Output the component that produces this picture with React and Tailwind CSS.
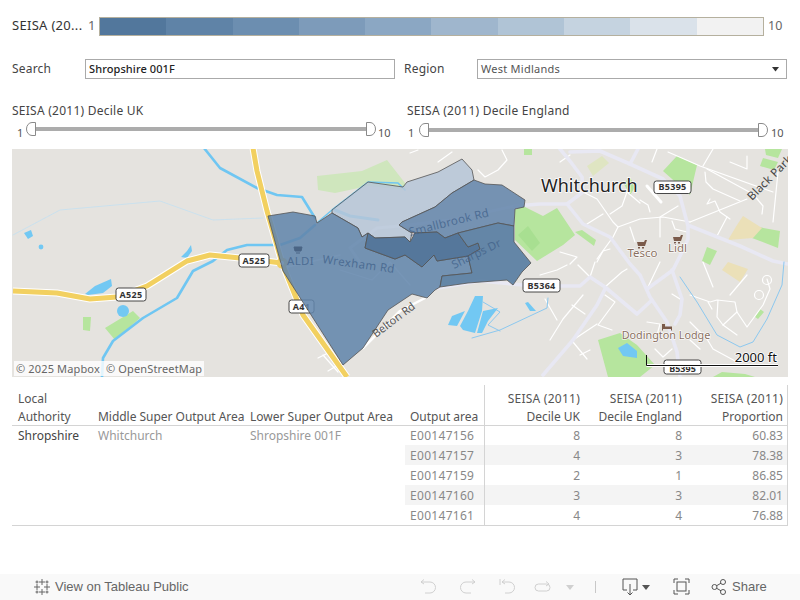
import React from "react";

const F = { fontFamily: '"Noto Sans", "Open Sans", sans-serif' };
const legend = ["#52779c","#5f83a7","#6c8eb0","#7d9bba","#8ba7c3","#9fb6cd","#b0c4d6","#c5d3e0","#dae2ea","#f2f2f2"];

function Thumb({ side }) {
  return side === "l" ? (
    <svg width="10" height="14" viewBox="0 0 10 14" className="shrink-0"><path d="M9.500.5H6a5.500 6.500 0 0 0 0 13h3.500z" fill="#fff" stroke="#8a8a8a"/></svg>
  ) : (
    <svg width="10" height="14" viewBox="0 0 10 14" className="shrink-0"><path d="M.5.5H4a5.500 6.500 0 0 1 0 13H.5z" fill="#fff" stroke="#8a8a8a"/></svg>
  );
}

function Shield({ x, y, w, t, h = 13 }) {
  return (
    <g>
      <rect x={x} y={y} width={w} height={h} rx="2.500" fill="#fff" stroke="#333" strokeWidth="0.9" />
      <text x={x + w / 2} y={y + h / 2 + 3.200} textAnchor="middle" fontSize="9" fontWeight="700" fill="#333" letterSpacing="0.3">{t}</text>
    </g>
  );
}

const main = [
  "M560 149L570 161L582 177L583 192L567 204L583 224L610 237L630 264L640 275L650 297L667 322L677 352L680 377",
  "M570 152L600 151L630 164L663 179L680 196L688 226L688 239L680 256L673 270L647 289",
  "M638 149L630 164",
  "M515 206L540 204L567 204",
  "M690 226L740 246L773 261L788 264",
  "M438 288L480 281L523 285L560 286L580 286L590 277L605 287L637 314L652 300",
  "M605 289L597 305L573 340L543 375",
  "M672 270L682 299L680 315L675 324",
];
const thin = [
  "M583 192L597 199L613 222L618 227L640 219L663 217L690 222","M690 222L747 199","M618 227L613 237L597 259",
  "M678 206L660 217L660 237","M707 169L753 194L763 206L762 214","M668 152L700 166L773 192","M705 172L706 182L713 189L740 201",
  "M710 199L707 204L715 201L720 212L730 219","M727 217L717 236","M610 214L622 206L627 192","M603 214L587 224",
  "M657 149L652 162","M713 149L703 166","M730 162L747 169L747 156","M778 172L773 222","M672 221L675 229L687 232","M630 227L635 242",
  "M560 162L570 155","M560 252L577 257L570 264","M597 262L603 251L610 249","M410 153L418 150","M438 162L452 152",
  "M502 150L507 160L498 170L485 177L478 170","M640 200L648 205L650 212","M627 192L640 203",
  "M540 275L557 270L567 265","M578 265L590 277","M595 262L590 277","M605 287L622 272L627 269","M647 289L660 262",
  "M545 299L557 320","M583 295L563 319L550 340","M572 305L585 314","M605 295L615 302L598 325L612 330","M597 324L573 340",
  "M573 342L587 359","M580 355L590 350","M647 322L660 324L657 335","M690 322L707 339L713 349L737 362","M690 340L700 349",
  "M655 349L663 357L672 349","M690 295L710 302L717 300L735 302L737 312L723 325L717 317L718 300","M708 302L712 309",
  "M737 312L747 327L763 305L770 289L767 279","M723 325L737 335","M703 262L713 287","M672 294L680 299","M747 275L730 295",
  "M318 358L328 353M323 355L338 372M328 371L338 365",
];

function MapSvg() {
  return (
    <svg viewBox="12 149 776 228" width="776" height="228" className="block" style={F}>
      <rect x="12" y="149" width="776" height="228" fill="#e5e3df" />
      <g fill="#b6e59e">
        <path d="M515 210L523 206L543 216L557 208L575 235L563 245L537 261L515 240Z" />
        <path d="M575 232L582 230L596 240L594 246Z" />
        <path d="M663 171L677 156L697 165L690 195Z" />
        <path d="M763 158L778 162L774 170L760 166Z" />
        <path d="M765 149L782 149L778 158L766 155Z" />
        <path d="M524 149L532 149L532 155L524 155Z" />
        <path d="M753 226L780 231L778 248L752 238Z" />
        <path d="M707 247L717 251L710 265L702 261Z" />
        <path d="M598 340L620 333L637 345L655 365L640 377L608 377Z" />
        <path d="M83 317L91 317L90 331L83 330Z" />
        <path d="M105 328L133 311L140 318L115 340Z" />
        <path d="M755 317L760 309L764 312L758 319Z" />
        <path d="M624 184L629 177L636 186L630 195Z" />
        <path d="M713 377L722 372L745 374L755 377Z" />
      </g>
      <path d="M317 176L362 171L387 160L405 183L405 190L368 186L335 193L318 190Z" fill="#cfe6bd" />
      <path d="M518 235L528 226L540 243L532 251Z" fill="#a8df91" />
      <g fill="#ebe0b8">
        <path d="M728 240L737 225L743 216L762 228L753 238Z" />
        <path d="M722 270L728 262L748 269L740 282Z" />
      </g>
      <path d="M587 166L602 156L609 163L593 176Z" fill="#dfe5c2" />
      <g fill="none" stroke="#fff" strokeWidth="1.200" strokeLinecap="round" strokeLinejoin="round">
        {thin.map((d) => <path key={d} d={d} />)}
        <circle cx="767" cy="280" r="4.500" />
        <circle cx="759" cy="295" r="4.500" />
        <path d="M647 186L661 202" strokeWidth="3" />
        <path d="M360 262L350 248L377 228L400 226L450 220L515 206" strokeWidth="3" stroke="#f3f3f8" />
        <path d="M427 297L400 311L363 348" strokeWidth="2.500" />
        <path d="M283 268L340 255" strokeWidth="1.500" />
        <path d="M340 270L372 280L390 262L410 285" strokeWidth="1.200" />
      </g>
      <g fill="none" stroke="#e8e8f3" strokeWidth="3.600" strokeLinecap="round" strokeLinejoin="round">
        {main.map((d) => <path key={d} d={d} />)}
      </g>
      <g fill="none" stroke="#6fc6f2" strokeLinecap="round" strokeLinejoin="round">
        <path d="M204 148L220 168L257 188L277 195L302 197L315 218" strokeWidth="2.600" />
        <path d="M315 225L300 238L280 245L247 245L227 250L213 261L193 271L177 298L143 318L113 341L103 358L102 377" strokeWidth="2.600" />
        <path d="M318 222L332 210L358 190L368 182L398 183L405 190" strokeWidth="1.600" />
        <path d="M335 210L350 216L378 220" strokeWidth="3" />
        <path d="M13 235L60 210L160 201L213 220L263 218" strokeWidth="0.7" stroke="#bfe0f3" />
        <path d="M472 338L500 330L547 308L548 298" strokeWidth="1" stroke="#8cc8ef" />
        <path d="M483 302L500 312L488 325L500 331" strokeWidth="1" stroke="#8cc8ef" />
        <path d="M680 277L697 302L717 335L740 347L753 342L767 319L782 285L784 262" strokeWidth="1" stroke="#8cc8ef" />
      </g>
      <g fill="#72c8f3">
        <path d="M85 294L95 286L111 279L112 286L103 293L88 295Z" />
        <path d="M181 257L187 251L191 245L192 251L187 258Z" />
        <circle cx="123" cy="311" r="6" />
        <circle cx="41" cy="247" r="2.400" />
        <path d="M24 233L31 230L33 236L28 239Z" />
        <path d="M460 326L468 311L475 296L483 296L482 311L475 333L463 330Z" />
        <path d="M477 333L483 311L498 308L488 321L482 333Z" />
        <path d="M448 325L452 316L465 311L457 326Z" />
        <path d="M525 303L528 302L536 311L530 311Z" />
        <path d="M618 348L627 343L637 351L637 358L623 356Z" />
      </g>
      <g fill="none" strokeLinecap="butt" strokeLinejoin="round">
        <path d="M253 148L257 171L267 211L282 263L303 315L347 377" stroke="#fff" strokeWidth="7" />
        <path d="M13 291L57 293L90 299L117 297L147 286L187 261L210 255L240 258L282 263" stroke="#fff" strokeWidth="7" />
        <path d="M253 148L257 171L267 211L282 263L303 315L347 377" stroke="#f2d060" strokeWidth="5" />
        <path d="M13 291L57 293L90 299L117 297L147 286L187 261L210 255L240 258L282 263" stroke="#f2d060" strokeWidth="5" />
      </g>
      <circle cx="282" cy="263" r="5.500" fill="#f2d060" />
      <circle cx="282" cy="263" r="2" fill="#fff" />
      <Shield x={116} y={288} w={30} t="A525" />
      <Shield x={239} y={254} w={30} t="A525" />
      <Shield x={289} y={300} w={25} t="A41" />
      <g strokeLinejoin="round" stroke="#555" strokeWidth="1" strokeOpacity="0.8">
        <path d="M332 210L368 182L403 187L407 182L438 172L462 159L472 170L474 180L452 193L435 207L402 222L399 225L412 233L410 242L405 237L375 238L368 233L362 237L358 228L332 213Z" fill="#b6c6d8" fillOpacity="0.85" />
        <path d="M268 216L293 212L315 216L317 223L332 213L358 228L362 237L368 233L365 248L395 259L405 255L422 267L434 255L437 261L468 256L472 273L442 276L440 287L435 290L427 298L412 294L403 300L388 310L363 348L343 365L283 271Z" fill="#6285ab" fillOpacity="0.87" />
        <path d="M399 225L402 222L435 207L452 193L474 180L485 184L502 185L525 200L524 207L515 209L514 226L498 223L458 233L445 238L437 232L415 233L410 232Z" fill="#6888ad" fillOpacity="0.9" />
        <path d="M365 248L368 233L375 238L405 237L410 242L415 233L437 232L445 238L458 233L468 247L478 243L480 249L468 256L437 261L434 255L422 267L405 255L395 259Z" fill="#4a6f96" fillOpacity="0.93" />
        <path d="M458 233L498 223L514 226L514 242L531 263L522 272L513 285L507 280L468 283L440 287L442 276L472 273L468 256L480 249L478 243L468 247Z" fill="#5a7fa3" fillOpacity="0.93" />
      </g>
      <g fill="#42628a" fillOpacity="0.8">
        <text x="322" y="263" fontSize="11.500" transform="rotate(8 322 263)" letterSpacing="0.4">Wrexham Rd</text>
        <text x="410" y="236" fontSize="11.500" transform="rotate(-14 410 236)" letterSpacing="0.3">Smallbrook Rd</text>
        <text x="454" y="269" fontSize="11.500" transform="rotate(-26 454 269)">Sharps Dr</text>
        <text x="287" y="265" fontSize="11.500" letterSpacing="0.3">ALDI</text>
      </g>
      <text x="376" y="338" fontSize="11" fill="#555" transform="rotate(-37 376 338)">Belton Rd</text>
      <path d="M294 247h8l-1 4h-6zM296 253h4" stroke="#4a6585" fill="#4a6585" strokeWidth="1" />
      <text x="541" y="192" fontSize="18" fill="#222" stroke="#fff" strokeWidth="1.500" paintOrder="stroke">Whitchurch</text>
      <Shield x={654} y={181} w={37} t="B5395" h={12.500} />
      <Shield x={523} y={279} w={37} t="B5364" />
      <rect x="664" y="360" width="37" height="14" rx="2.500" fill="#fff" stroke="#333" strokeWidth="0.9" />
      <text x="682.500" y="372" textAnchor="middle" fontSize="9" fontWeight="700" fill="#333">B5395</text>
      <text x="752" y="201" fontSize="11.500" fill="#444" transform="rotate(-45 752 201)" letterSpacing="0.2">Black Park Rd</text>
      <g fill="#7a5a4a">
        <path d="M637 242h7l1-2h2l-2 6h-7zM638 247h2v1.500h-2zM642 247h2v1.500h-2z" />
        <path d="M673 237h7l1-2h2l-2 6h-7zM674 242h2v1.500h-2zM678 242h2v1.500h-2z" />
        <path d="M662 324v6.500h1v-1.500h8v1.500h1v-4h-7v-2.500z" />
      </g>
      <g fill="#8a7061" stroke="#fff" strokeWidth="1.200" paintOrder="stroke">
        <text x="642.500" y="257" textAnchor="middle" fontSize="11.500">Tesco</text>
        <text x="677.500" y="252" textAnchor="middle" fontSize="11.500">Lidl</text>
        <text x="666" y="339" textAnchor="middle" fontSize="10.800">Dodington Lodge</text>
      </g>
      <path d="M646.500 365.500H778" fill="none" stroke="#fff" strokeWidth="3" />
      <text x="777" y="362" textAnchor="end" fontSize="13" fill="#111" stroke="#fff" strokeWidth="1.500" paintOrder="stroke">2000 ft</text>
      <path d="M646.500 355V365.500H778" fill="none" stroke="#111" strokeWidth="1" />
    </svg>
  );
}

const rows = [
  ["E00147156", "8", "8", "60.83"],
  ["E00147157", "4", "3", "78.38"],
  ["E00147159", "2", "1", "86.85"],
  ["E00147160", "3", "3", "82.01"],
  ["E00147161", "4", "4", "76.88"],
];

function Table() {
  return (
    <div className="w-[776px] ml-[12px] mt-[8px] border-b border-[#d4d4d4] text-[12px] text-[#555]">
      <div className="flex h-[41px] border-b border-[#d4d4d4] leading-[18px]">
        <div className="w-[86px] pl-[6px] pt-[5px]">Local<br />Authority</div>
        <div className="w-[152px] pt-[23px] whitespace-nowrap tracking-[-0.03px]">Middle Super Output Area</div>
        <div className="w-[160px] pt-[23px] whitespace-nowrap">Lower Super Output Area</div>
        <div className="w-[74px] pt-[23px] whitespace-nowrap">Output area</div>
        <div className="w-[101px] border-l border-[#d4d4d4] text-right pt-[5px] pr-[5px]"><span className="tracking-[0.25px]">SEISA (2011)</span><br />Decile UK</div>
        <div className="w-[102px] text-right pt-[5px] pr-[5px]"><span className="tracking-[0.25px]">SEISA (2011)</span><br />Decile England</div>
        <div className="flex-1 text-right pt-[5px] pr-[4px] border-r border-[#d4d4d4]"><span className="tracking-[0.25px]">SEISA (2011)</span><br />Proportion</div>
      </div>
      <div className="flex">
        <div className="w-[86px] pl-[6px] leading-[20px] text-[#444]">Shropshire</div>
        <div className="w-[152px] leading-[20px] text-[#999]">Whitchurch</div>
        <div className="w-[155px] leading-[20px] text-[#999]">Shropshire 001F</div>
        <div className="flex-1">
          {rows.map((r, i) => (
            <div key={r[0]} className={`flex leading-[20px] text-[#888] ${i === 0 ? "h-[19px]" : "h-[20px]"} ${i % 2 ? "bg-[#f4f4f4]" : ""}`}>
              <div className={`w-[79px] pl-[5px] tracking-[0.3px] ${i ? "pt-[1px]" : ""}`}>{r[0]}</div>
              <div className={`w-[101px] text-right pr-[5px] border-l border-[#d4d4d4] ${i ? "pt-[1px]" : ""}`}>{r[1]}</div>
              <div className={`w-[102px] text-right pr-[5px] ${i ? "pt-[1px]" : ""}`}>{r[2]}</div>
              <div className={`flex-1 text-right pr-[4px] border-r border-[#d4d4d4] ${i ? "pt-[1px]" : ""}`}>{r[3]}</div>
            </div>
          ))}
        </div>
      </div>
    </div>
  );
}

function Ico({ w = 18, children, className = "" }) {
  return (
    <svg width={w} height="18" viewBox={`0 0 ${w} 18`} fill="none" className={`shrink-0 ${className}`}>{children}</svg>
  );
}

function Toolbar() {
  const dim = "#d0d0d0";
  const on = "#555";
  return (
    <div className="mt-auto h-[26px] bg-[#f9f9f9] flex items-center text-[#666]" style={{ fontFamily: '"Liberation Sans", Arial, sans-serif' }}>
      <div className="w-[419px] flex items-center shrink-0">
        <svg width="18" height="18" viewBox="0 0 18 18" className="ml-[33px]" stroke="#666" strokeWidth="1" fill="none">
          <path d="M9 1v6M6 4h6M9 11v6M6 14h6M1 9h6M4 6v6M11 9h6M14 6v6M4 2.500v3M2.500 4h3M14 2.500v3M12.500 4h3M4 12.500v3M2.500 14h3M14 12.500v3M12.500 14h3" />
        </svg>
        <span className="ml-[4px] text-[13px] font-medium tracking-[-0.02px]">View on Tableau Public</span>
      </div>
      <Ico w={17}><path d="M2 4h9a5 5 0 0 1 0 11H6M2 4l3-2.500M2 4l3 2" stroke={dim} strokeWidth="1" /></Ico>
      <Ico w={17} className="ml-[23px]"><path d="M16 4H7a5 5 0 0 0 0 11h5M16 4l-3-2.500M16 4l-3 2" stroke={dim} strokeWidth="1" /></Ico>
      <Ico w={17} className="ml-[23px]"><path d="M1 1v6M3 4h7a5 5 0 0 1 0 11H6M3 4l3-2.500M3 4l3 2" stroke={dim} strokeWidth="1" /></Ico>
      <Ico w={18} className="ml-[18px]"><rect x="1" y="6" width="15" height="7" rx="3.500" stroke={dim} /><path d="M12 3.500l3 2.500-3 2" stroke={dim} /></Ico>
      <Ico w={9} className="ml-[14px]"><path d="M0 7h8l-4 5z" fill={dim} /></Ico>
      <div className="w-px h-[12px] bg-[#c8c8c8] ml-[20px]" />
      <Ico w={18} className="ml-[26px]"><path d="M5 12H1V1h14v11h-4M8 6v11M5.500 14.500L8 17l2.500-2.500" stroke={on} strokeWidth="1" /></Ico>
      <Ico w={9} className="ml-[2px]"><path d="M0 7h8l-4 5z" fill={on} /></Ico>
      <Ico w={17} className="ml-[22px]">
        <path d="M1 5V1h4M12 1h4v4M16 12v4h-4M5 16H1v-4" stroke={on} />
        <rect x="4" y="4" width="9" height="9" stroke={on} />
      </Ico>
      <Ico w={16} className="ml-[21px]">
        <circle cx="3.500" cy="9" r="2.500" stroke={on} /><circle cx="12" cy="4" r="2.500" stroke={on} /><circle cx="12" cy="14" r="2.500" stroke={on} />
        <path d="M5.700 7.700L10 5.200M5.700 10.300L10 12.800" stroke={on} />
      </Ico>
      <span className="ml-[5px] text-[13px] font-medium">Share</span>
    </div>
  );
}

export default function App() {
  return (
    <div className="w-[800px] h-[600px] bg-white flex flex-col overflow-hidden" style={F}>
      <div className="flex items-center h-[20px] mt-[16px] ml-[12px]">
        <span className="w-[76px] text-[13px] text-[#333] whitespace-nowrap tracking-[0.3px]">SEISA (20...</span>
        <span className="w-[11px] text-[13px] text-[#666]">1</span>
        <div className="flex w-[665px] h-[19px] border border-[#b5b09e]">
          {legend.map((c) => <div key={c} className="flex-1" style={{ backgroundColor: c }} />)}
        </div>
        <span className="ml-[4px] text-[12.500px] text-[#666]">10</span>
      </div>
      <div className="flex items-center mt-[23px] ml-[12px] h-[20px] text-[12px] text-[#444]">
        <span className="w-[73px] tracking-[0.2px]">Search</span>
        <div className="w-[310px] h-[20px] border border-[#aaa] flex items-center pl-[3px] text-[11px] font-medium text-[#222] tracking-[0.1px]">Shropshire 001F</div>
        <span className="w-[73px] ml-[9px] tracking-[0.2px]">Region</span>
        <div className="w-[310px] h-[20px] border border-[#aaa] flex items-center pl-[3px] text-[11px] text-[#555] justify-between tracking-[0.25px]">
          West Midlands
          <svg width="8" height="5" viewBox="0 0 8 5" className="mr-[6px]"><path d="M0 0h7L3.500 4.500z" fill="#333" /></svg>
        </div>
      </div>
      <div className="flex mt-[24px] h-[46px]">
        <div className="ml-[12px] w-[395px]">
          <div className="text-[12px] leading-[16px] text-[#444] tracking-[0.25px]">SEISA (2011) Decile UK</div>
          <div className="flex items-center h-[14px] mt-[3px]">
            <span className="text-[11px] text-[#555] w-[14px] leading-none pl-[5px] pt-[6px]">1</span>
            <Thumb side="l" />
            <div className="h-[4px] bg-[#acacac] w-[330px]" />
            <Thumb side="r" />
            <span className="text-[11px] text-[#555] ml-[2px] leading-none pt-[6px]">10</span>
          </div>
        </div>
        <div className="w-[381px]">
          <div className="text-[12px] leading-[16px] text-[#444] tracking-[0.25px]">SEISA (2011) Decile England</div>
          <div className="flex items-center h-[14px] mt-[4px]">
            <span className="text-[11px] text-[#555] w-[12px] leading-none pl-[1px] pt-[5px]">1</span>
            <Thumb side="l" />
            <div className="h-[4px] bg-[#acacac] w-[329px]" />
            <Thumb side="r" />
            <span className="text-[11px] text-[#555] ml-[3px] leading-none pt-[5px]">10</span>
          </div>
        </div>
      </div>
      <div className="relative ml-[12px] w-[776px] h-[228px]">
        <MapSvg />
        <div className="absolute left-[2px] bottom-[1px] h-[15px] px-[2px] bg-white/80 text-[11px] leading-[15px] text-[#666] tracking-[0.15px] whitespace-pre">© 2025 Mapbox  © OpenStreetMap</div>
      </div>
      <Table />
      <Toolbar />
    </div>
  );
}
